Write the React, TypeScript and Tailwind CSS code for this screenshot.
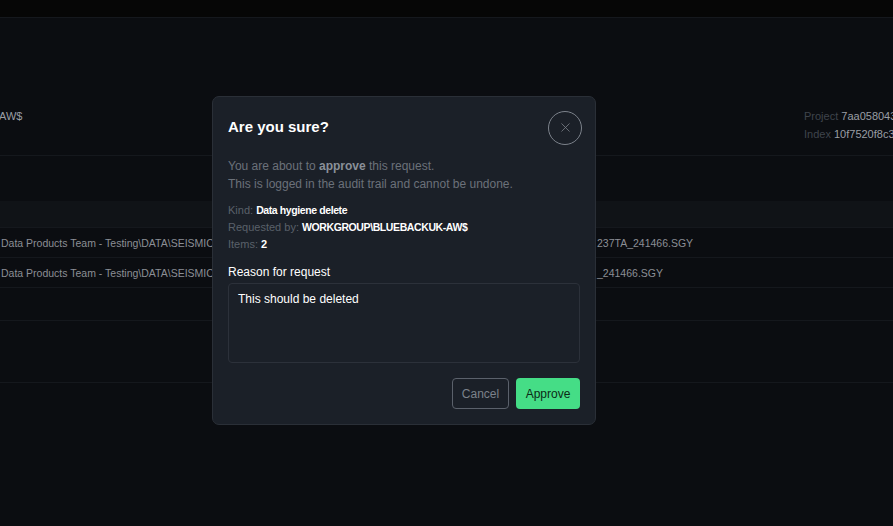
import { X } from "lucide-react"

const rows = [
  { left: "Data Products Team - Testing\\DATA\\SEISMIC", right: "237TA_241466.SGY" },
  { left: "Data Products Team - Testing\\DATA\\SEISMIC", right: "_241466.SGY" },
]

export default function App() {
  return (
    <div className="relative w-[893px] h-[526px] overflow-hidden bg-[#0b0d11] font-['Liberation_Sans',Arial,sans-serif]">
      {/* page behind the overlay */}
      <div className="h-[18px] bg-[#060606] border-b border-[#15181d]" />
      <div className="h-[138px] border-b border-[#15181d] flex items-end justify-between pb-[12px]">
        <div className="text-[11px] text-[#9a9ea5] leading-[18px] mb-[18px] -ml-px">AW$</div>
        <div className="text-[11px] leading-[18px] w-[89px] overflow-hidden">
          <div className="whitespace-nowrap">
            <span className="text-[#3f444c]">Project </span>
            <span className="text-[#9a9ea5]">7aa058043</span>
          </div>
          <div className="whitespace-nowrap">
            <span className="text-[#3f444c]">Index </span>
            <span className="text-[#9a9ea5]">10f7520f8c34</span>
          </div>
        </div>
      </div>
      <div className="h-[45px]" />
      <div className="h-[27px] bg-[#101317] border-b border-[#15181d]" />
      {rows.map((r, i) => (
        <div key={i} className="h-[30px] border-b border-[#15181d] flex items-center pt-[2px] text-[10.5px] text-[#8b8f96] whitespace-nowrap">
          <span className="w-[597px] pl-px overflow-hidden">{r.left}</span>
          <span>{r.right}</span>
        </div>
      ))}
      <div className="h-[33px] border-b border-[#15181d]" />
      <div className="h-[62px] border-b border-[#15181d]" />

      {/* dialog */}
      <div className="absolute left-[212px] top-[96px] w-[384px] rounded-[7px] border border-[#2a2f37] bg-[#1b2028] px-[15px] pt-[13px] pb-[15px]">
        <div className="flex items-center justify-between h-[35px]">
          <h2 className="text-[15px] font-bold text-white">Are you sure?</h2>
          <button className="-mr-[2px] w-[34px] h-[34px] rounded-full border border-[#7c828b] flex items-center justify-center text-[#7c828b]">
            <X size={15} strokeWidth={1.25} />
          </button>
        </div>
        <div className="mt-[12px] text-[12px] leading-[18px] text-[#6b717a]">
          <p>
            You are about to <span className="font-bold text-[#8a9099]">approve</span> this request.
          </p>
          <p>This is logged in the audit trail and cannot be undone.</p>
        </div>
        <div className="mt-[9px] text-[11px] leading-[17px] text-[#5a606a]">
          <div>
            Kind: <span className="font-bold text-white text-[10.5px] tracking-[-0.4px]">Data hygiene delete</span>
          </div>
          <div>
            Requested by: <span className="font-bold text-white text-[10.5px] tracking-[-0.4px]">WORKGROUP\BLUEBACKUK-AW$</span>
          </div>
          <div>
            Items: <span className="font-bold text-white">2</span>
          </div>
        </div>
        <div className="mt-[11px] text-[12px] leading-[16px] text-white">Reason for request</div>
        <div className="mt-[3px] h-[80px] rounded-[4px] border border-[#2c313a] px-[9px] py-[7px] text-[12px] leading-[16px] text-white">
          This should be deleted
        </div>
        <div className="mt-[15px] flex justify-end gap-[7px]">
          <button className="h-[31px] w-[57px] rounded-[4px] border border-[#5b616b] text-[12px] text-[#7c828b]">
            Cancel
          </button>
          <button className="h-[31px] w-[64px] rounded-[4px] bg-[#45dd86] text-[12px] text-[#0c2a17]">
            Approve
          </button>
        </div>
      </div>
    </div>
  )
}
